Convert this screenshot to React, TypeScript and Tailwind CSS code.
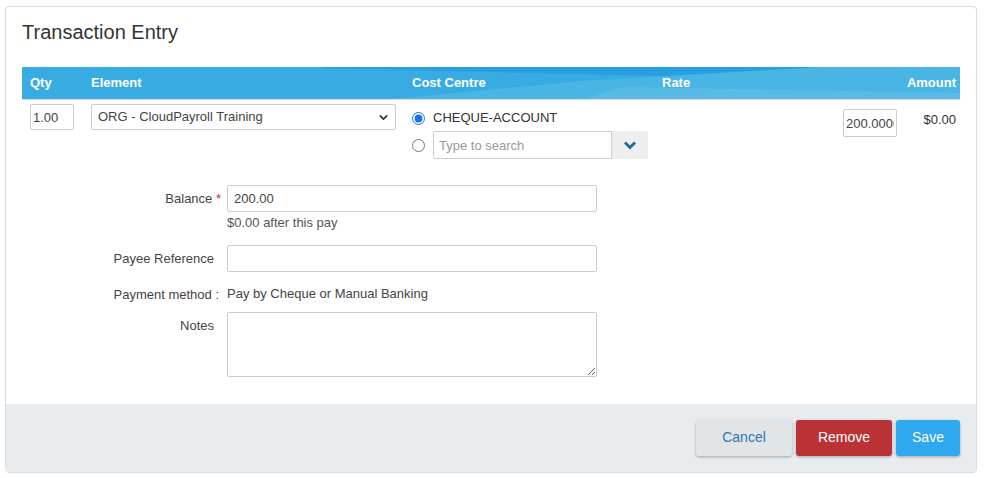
import { ChevronDown } from "lucide-react";

function HeaderBar() {
  return (
    <div className="relative h-[33px] bg-[#38ace2] border-b border-[#dddddd] overflow-hidden">
      {/* diagonal shading of the table header */}
      <svg className="absolute inset-0" width="938" height="33" viewBox="0 0 938 33" preserveAspectRatio="none">
        <polygon points="300,0 800,0 640,9 300,1" fill="#289fe0" />
        <polygon points="360,33 938,33 938,0 800,0 560,14" fill="#48b5e5" />
        <polygon points="600,20 938,26 938,33 560,33" fill="#58bbe6" />
      </svg>
      <div className="relative flex h-full items-center text-[13px] font-bold text-white">
        <div className="w-[61px] pl-[8px]">Qty</div>
        <div className="w-[321px] pl-[8px]">Element</div>
        <div className="w-[250px] pl-[8px]">Cost Centre</div>
        <div className="w-[250px] pl-[8px]">Rate</div>
        <div className="flex-1 pr-[4px] text-right">Amount</div>
      </div>
    </div>
  );
}

function EntryRow() {
  return (
    <div className="flex h-[62px] text-[13px] text-[#333]">
      <div className="w-[61px] pl-[8px] pt-[4px]">
        <input
          defaultValue="1.00"
          className="h-[26px] w-[44px] rounded-[2px] border border-[#cccccc] px-[2px] text-[13px] text-[#444] outline-none"
        />
      </div>
      <div className="w-[321px] pl-[8px] pt-[4px]">
        <div className="relative w-[305px]">
          <select className="h-[26px] w-full appearance-none rounded-[2px] border border-[#cccccc] bg-white pl-[6px] text-[13px] text-[#444] outline-none">
            <option>ORG - CloudPayroll Training</option>
          </select>
          <ChevronDown className="pointer-events-none absolute right-[6px] top-[7px] h-[13px] w-[13px] text-[#333]" strokeWidth={3} />
        </div>
      </div>
      <div className="w-[250px] pl-[8px] pt-[10px]">
        <label className="flex items-center gap-[8px]">
          <input type="radio" name="cc" defaultChecked className="m-0 h-[13px] w-[13px] accent-[#1a73e8]" />
          <span className="leading-[16px]">CHEQUE-ACCOUNT</span>
        </label>
        <div className="mt-[5px] flex items-center gap-[8px]">
          <input type="radio" name="cc" className="m-0 h-[13px] w-[13px]" />
          <div className="flex h-[28px]">
            <input
              placeholder="Type to search"
              className="h-[28px] w-[179px] rounded-l-[2px] border border-[#cccccc] px-[5px] text-[13px] text-[#444] placeholder:text-[#999] outline-none"
            />
            <div className="flex h-[28px] w-[36px] items-center justify-center bg-[#eeeeee]">
              <svg width="12" height="9" viewBox="0 0 12 9">
                <path d="M1 1.5 L6 6.5 L11 1.5" fill="none" stroke="#1e6b9e" strokeWidth="2.8" />
              </svg>
            </div>
          </div>
        </div>
      </div>
      <div className="flex w-[251px] justify-end pr-[8px] pt-[9px]">
        <input
          defaultValue="200.0000"
          className="h-[28px] w-[54px] rounded-[2px] border border-[#cccccc] px-[2px] text-[13px] text-[#444] outline-none"
        />
      </div>
      <div className="flex-1 pr-[4px] pt-[10px] text-right">$0.00</div>
    </div>
  );
}

function FormRow({ label, children, pr = "pr-[13px]" }: { label: React.ReactNode; children: React.ReactNode; pr?: string }) {
  return (
    <div className="flex">
      <div className={`w-[205px] shrink-0 text-right ${pr}`}>{label}</div>
      <div className="flex-1">{children}</div>
    </div>
  );
}

export default function App() {
  return (
    <div className="min-h-[478px] bg-white pl-[5px] pt-[6px] font-['Liberation_Sans',Arial,sans-serif]">
      <div className="w-[972px] overflow-hidden rounded-[4px] border border-[#dddddd] bg-white">
        <div className="px-[16px] pt-[11px]">
          <h1 className="text-[20px] leading-[28px] text-[#333]">Transaction Entry</h1>
          <div className="mt-[21px]">
            <HeaderBar />
            <EntryRow />
          </div>

          <div className="mt-[23px] text-[13px] text-[#444]">
            <FormRow
              pr="pr-[6px]"
              label={
                <span className="leading-[27px]">
                  Balance <span className="text-[#c9302c]">*</span>
                </span>
              }
            >
              <input
                defaultValue="200.00"
                className="h-[27px] w-[370px] rounded-[2px] border border-[#cccccc] px-[6px] text-[13px] text-[#444] outline-none"
              />
              <div className="mt-[3px] leading-[16px] text-[#555]">$0.00 after this pay</div>
            </FormRow>

            <div className="mt-[14px]">
              <FormRow label={<span className="leading-[27px]">Payee Reference</span>}>
                <input className="h-[27px] w-[370px] rounded-[2px] border border-[#cccccc] px-[6px] text-[13px] outline-none" />
              </FormRow>
            </div>

            <div className="mt-[13px]">
              <FormRow pr="pr-[8px]" label="Payment method :">
                <div className="leading-[18px]">Pay by Cheque or Manual Banking</div>
              </FormRow>
            </div>

            <div className="mt-[7px]">
              <FormRow label={<span className="leading-[27px]">Notes</span>}>
                <textarea className="block h-[65px] w-[370px] rounded-[2px] border border-[#cccccc] px-[6px] text-[13px] outline-none" />
              </FormRow>
            </div>
          </div>
        </div>

        <div className="mt-[27px] flex h-[68px] items-start justify-end gap-[4px] bg-[#e9ecef] pr-[16px] pt-[16px] text-[14px]">
          <button className="h-[36px] w-[96px] rounded-[3px] bg-[#e1e5e8] text-[#2d78ad] shadow-[0_1px_3px_rgba(0,0,0,0.3)]">
            Cancel
          </button>
          <button className="h-[36px] w-[96px] rounded-[3px] bg-[#b83236] text-white shadow-[0_1px_3px_rgba(0,0,0,0.3)]">
            Remove
          </button>
          <button className="h-[36px] w-[64px] rounded-[3px] bg-[#2ea8ef] text-white shadow-[0_1px_3px_rgba(0,0,0,0.3)]">
            Save
          </button>
        </div>
      </div>
    </div>
  );
}
